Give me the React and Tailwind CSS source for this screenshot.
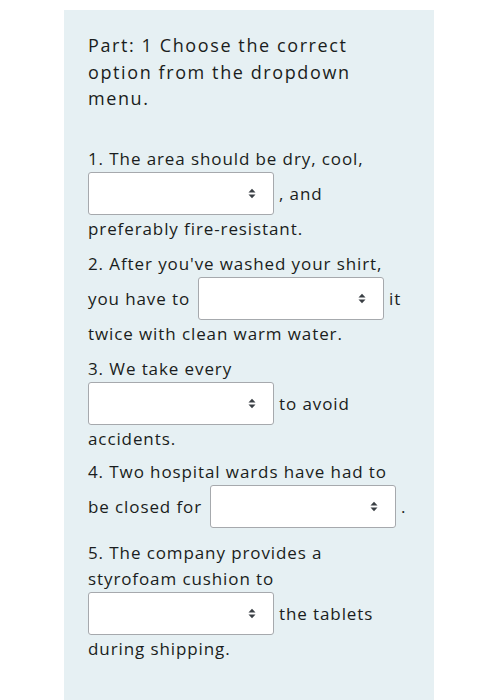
import React from 'react';

function SortIcon() {
  return (
    <svg width="8" height="11" viewBox="0 0 8 11" className="text-[#3a3f44]">
      <path d="M0.5 4.5 L4 0.8 L7.5 4.5 Z" fill="currentColor" />
      <path d="M0.5 6.5 L4 10.2 L7.5 6.5 Z" fill="currentColor" />
    </svg>
  );
}

function Dropdown({ className = '' }) {
  return (
    <div
      className={`flex h-[43px] w-[186px] shrink-0 items-center justify-end rounded-[3px] border border-[#a6a9ad] bg-white pr-[17px] ${className}`}
    >
      <SortIcon />
    </div>
  );
}

function Line({ children }) {
  return <div className="h-[26px] whitespace-nowrap">{children}</div>;
}

function SelectRow({ children }) {
  return <div className="flex h-[44px] items-center whitespace-nowrap">{children}</div>;
}

export default function App() {
  return (
    <div className="min-h-[700px] bg-white">
      <div
        className="ml-[64px] mt-[10px] min-h-[690px] w-[370px] bg-[#e6f0f3] px-[24px] pt-[22px] text-[#1a1d20]"
        style={{ fontFamily: '"Open Sans", sans-serif' }}
      >
        <div className="mb-[34px] text-[18px] font-medium leading-[26.5px] tracking-[1.6px]">
          <div>Part: 1 Choose the correct</div>
          <div>option from the dropdown</div>
          <div>menu.</div>
        </div>

        <div className="text-[17px] leading-[26px] tracking-[0.9px]">
          <div className="mb-[9px]">
            <Line>1. The area should be dry, cool,</Line>
            <SelectRow>
              <Dropdown />
              <span className="ml-[5px]">, and</span>
            </SelectRow>
            <Line>preferably fire-resistant.</Line>
          </div>

          <div className="mb-[9px]">
            <Line>2. After you've washed your shirt,</Line>
            <SelectRow>
              <span>you have to</span>
              <Dropdown className="ml-[8px]" />
              <span className="ml-[5px]">it</span>
            </SelectRow>
            <Line>twice with clean warm water.</Line>
          </div>

          <div className="mb-[7px]">
            <Line>3. We take every</Line>
            <SelectRow>
              <Dropdown />
              <span className="ml-[5px]">to avoid</span>
            </SelectRow>
            <Line>accidents.</Line>
          </div>

          <div className="mb-[11px]">
            <Line>4. Two hospital wards have had to</Line>
            <SelectRow>
              <span>be closed for</span>
              <Dropdown className="ml-[8px]" />
              <span className="ml-[5px]">.</span>
            </SelectRow>
          </div>

          <div>
            <Line>5. The company provides a</Line>
            <Line>styrofoam cushion to</Line>
            <SelectRow>
              <Dropdown />
              <span className="ml-[5px]">the tablets</span>
            </SelectRow>
            <Line>during shipping.</Line>
          </div>
        </div>
      </div>
    </div>
  );
}
